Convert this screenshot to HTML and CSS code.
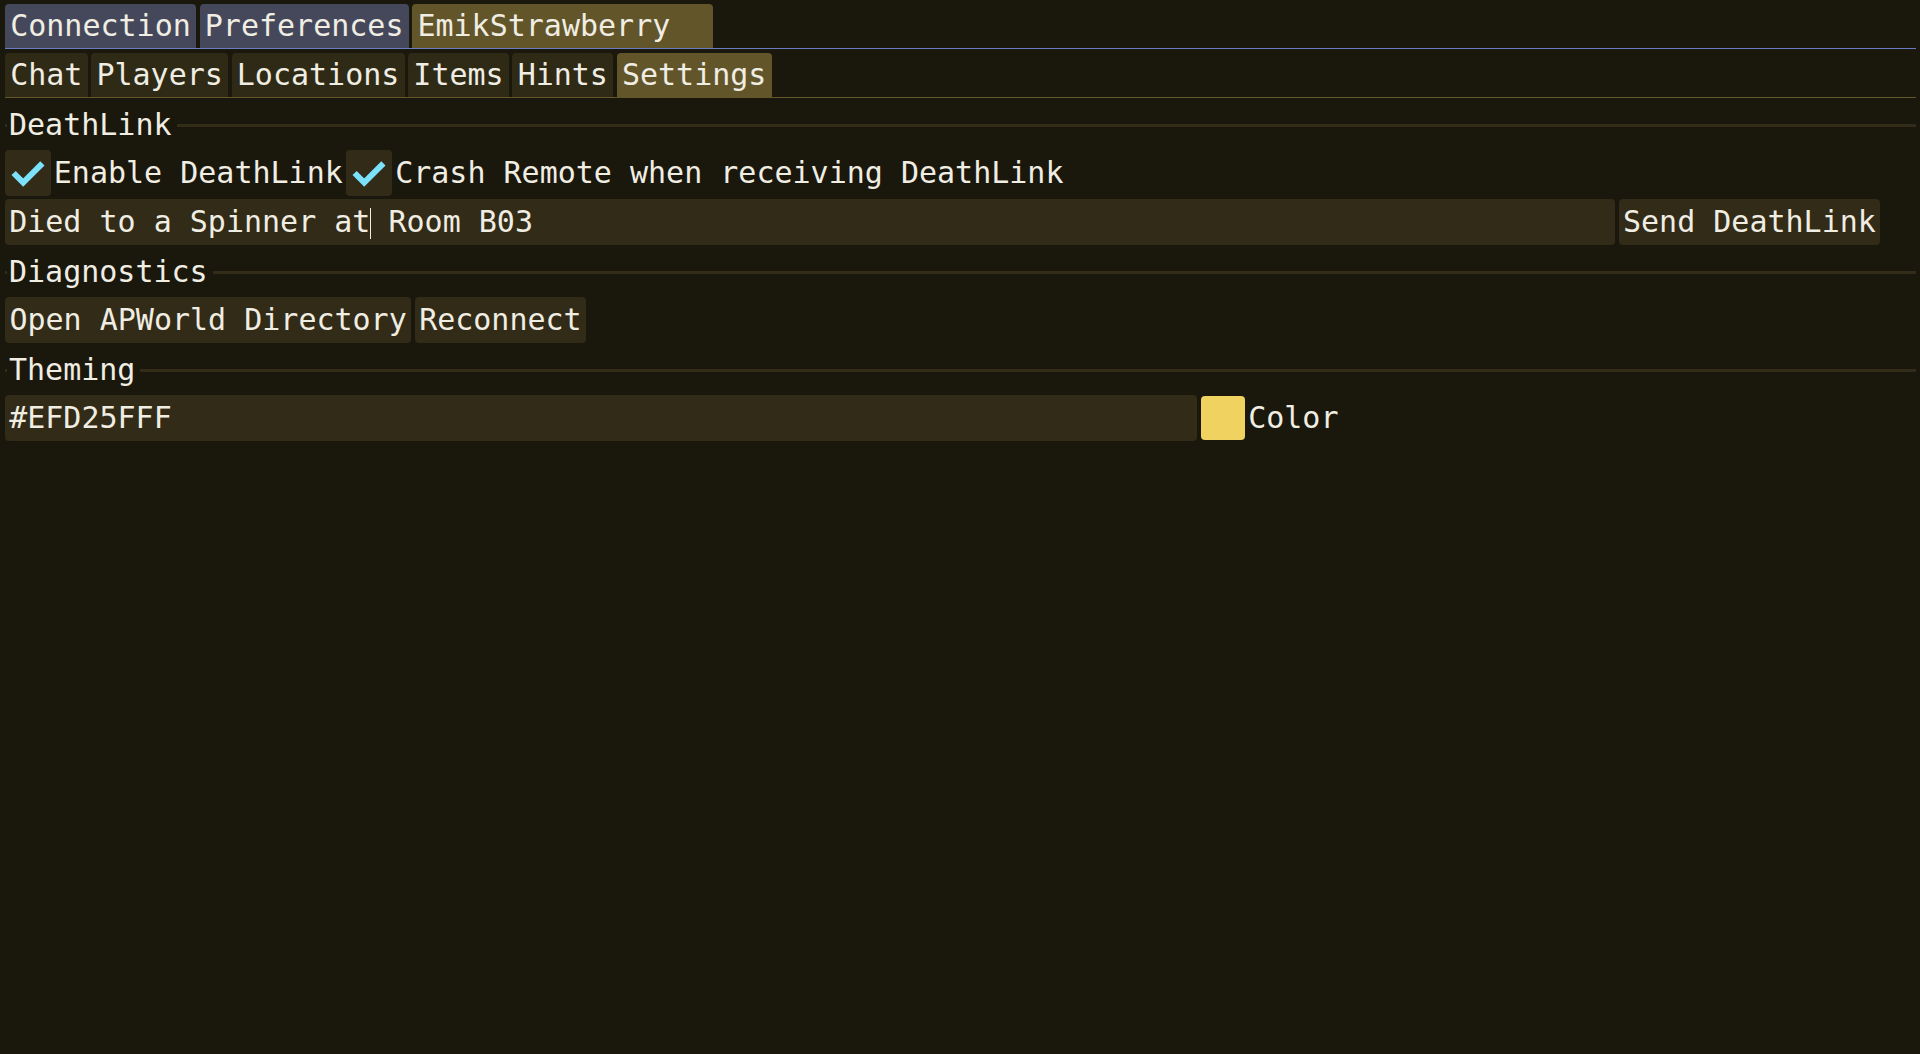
FILE: index.html
```html
<!DOCTYPE html>
<html>
<head>
<meta charset="utf-8">
<title>Settings</title>
<link rel="stylesheet" href="styles.css">
</head>
<body>
<div class="window">
  <div class="tabbar tabbar-main">
    <div class="tab tab-blue">Connection</div>
    <div class="tab tab-blue">Preferences</div>
    <div class="tab tab-active tab-wide">EmikStrawberry</div>
  </div>
  <div class="tabbar tabbar-sub">
    <div class="tab">Chat</div>
    <div class="tab">Players</div>
    <div class="tab">Locations</div>
    <div class="tab">Items</div>
    <div class="tab">Hints</div>
    <div class="tab tab-active">Settings</div>
  </div>
  <div class="content">
    <div class="sep"><span class="sep-label">DeathLink</span></div>
    <div class="row">
      <div class="check">
        <span class="check-box"><svg class="check-mark" width="46" height="46" viewBox="0 0 46 46"><polyline points="8.6,23 18.2,32.6 37.4,13.4" /></svg></span>
        <span class="check-label">Enable DeathLink</span>
      </div>
      <div class="check">
        <span class="check-box"><svg class="check-mark" width="46" height="46" viewBox="0 0 46 46"><polyline points="8.6,23 18.2,32.6 37.4,13.4" /></svg></span>
        <span class="check-label">Crash Remote when receiving DeathLink</span>
      </div>
    </div>
    <div class="row">
      <div class="input input-msg">Died to a Spinner at<span class="caret"></span> Room B03</div>
      <div class="button">Send DeathLink</div>
    </div>
    <div class="sep"><span class="sep-label">Diagnostics</span></div>
    <div class="row">
      <div class="button">Open APWorld Directory</div>
      <div class="button">Reconnect</div>
    </div>
    <div class="sep"><span class="sep-label">Theming</span></div>
    <div class="row">
      <div class="input input-color">#EFD25FFF</div>
      <div class="swatch"></div>
      <span class="plain-label">Color</span>
    </div>
  </div>
</div>
</body>
</html>
```
FILE: styles.css
```css
html, body {
  margin: 0;
  padding: 0;
  background: #1a170c;
}

body {
  width: 1920px;
  height: 1054px;
  overflow: hidden;
  font-family: "DejaVu Sans Mono", "Liberation Mono", monospace;
  font-size: 30px;
  color: #f0ede3;
}

.window {
  padding: 4px 4px 0 5px;
}

.tabbar {
  display: flex;
  gap: 3.6px;
  height: 44px;
  align-items: flex-end;
}

.tabbar-main {
  border-bottom: 1px solid #6b7bc2;
  margin-bottom: 4px;
}

.tabbar-sub {
  border-bottom: 1px solid #635629;
  margin-bottom: 3px;
}

.tab {
  height: 44px;
  line-height: 43px;
  padding: 0 5.2px;
  border-radius: 4px 4px 0 0;
  background: #2f2a16;
  white-space: pre;
}

.tab-blue {
  background: #45485b;
}

.tab-active {
  background: #62552a;
}

.tab-wide {
  width: 290px;
}

.content {
  display: flex;
  flex-direction: column;
  gap: 3px;
}

.row {
  display: flex;
  gap: 3.6px;
  height: 46px;
  align-items: flex-start;
}

.sep {
  display: flex;
  height: 46px;
  align-items: flex-start;
}

.sep::before {
  content: "";
  width: 2px;
  height: 3px;
  margin-top: 22.5px;
  background: #322c18;
}

.sep::after {
  content: "";
  flex: 1;
  height: 3px;
  margin-top: 22.5px;
  margin-left: 5px;
  background: #322c18;
}

.sep-label {
  height: 46px;
  line-height: 47px;
  margin-left: 2px;
  white-space: pre;
}

.check {
  display: flex;
  gap: 2.8px;
  height: 46px;
}

.check-box {
  width: 46px;
  height: 46px;
  border-radius: 4px;
  background: #322b17;
}

.check-mark {
  display: block;
}

.check-mark polyline {
  fill: none;
  stroke: #7ce1fb;
  stroke-width: 6;
  stroke-linejoin: miter;
  stroke-linecap: butt;
}

.check-label {
  line-height: 46px;
  white-space: pre;
}

.input {
  height: 46px;
  line-height: 46px;
  padding: 0 4.2px;
  box-sizing: border-box;
  border-radius: 4px;
  background: #322b17;
  white-space: pre;
}

.input-msg {
  width: 1610px;
}

.input-color {
  width: 1192px;
}

.caret {
  display: inline-block;
  width: 1px;
  height: 31px;
  margin-right: -1px;
  vertical-align: -6.6px;
  background: #f0ede3;
}

.button {
  height: 46px;
  line-height: 46px;
  padding: 0 4.4px;
  border-radius: 4px;
  background: #322b17;
  white-space: pre;
}

.swatch {
  width: 44px;
  height: 44px;
  margin-top: 1px;
  border-radius: 4px;
  background: #efd25f;
}

.plain-label {
  line-height: 46px;
  margin-left: 0;
  white-space: pre;
}
```
